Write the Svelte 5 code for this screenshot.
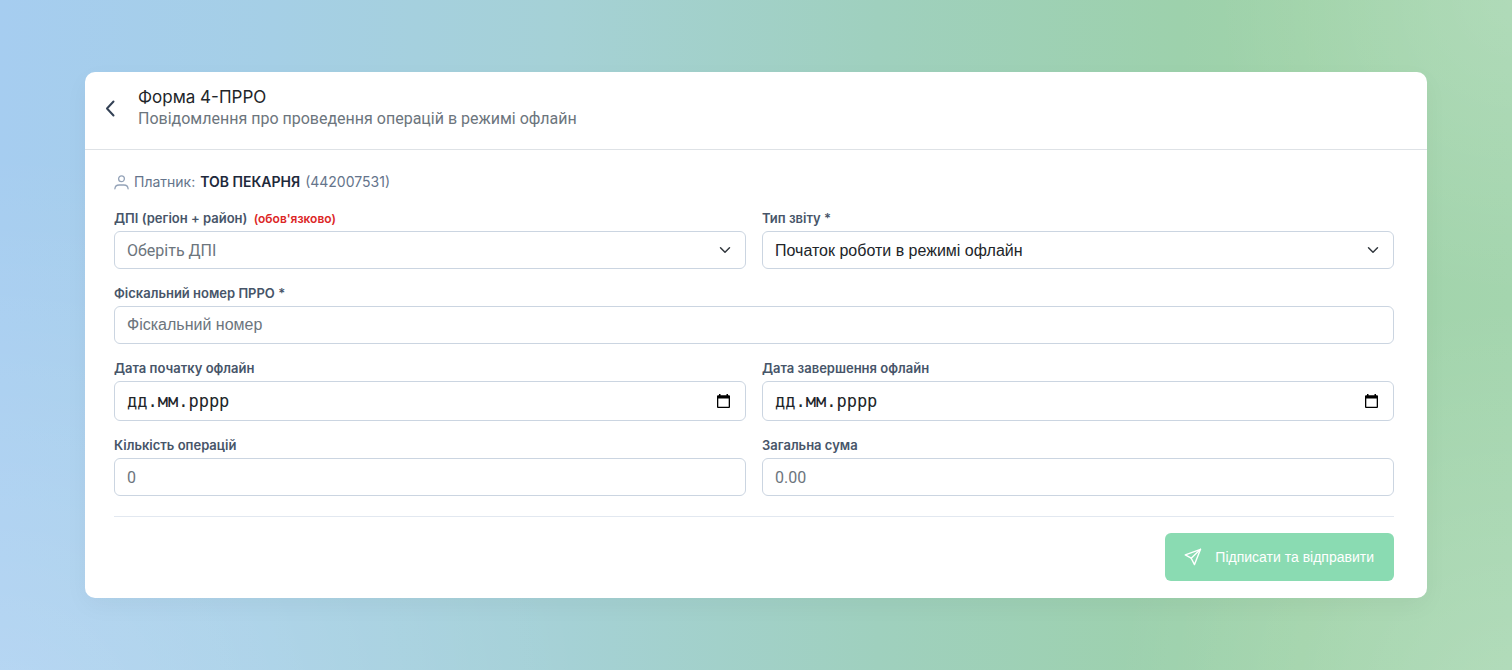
<script lang="ts">
  let office = '';
  let reportType = 'start';
  let fiscalNumber = '';
  let dateStart = '';
  let dateEnd = '';
  let operationsCount = '';
  let totalSum = '';

  const payer = { name: 'ТОВ ПЕКАРНЯ', code: '442007531' };

  const offices: string[] = [];
  const reportTypes = [
    { value: 'start', title: 'Початок роботи в режимі офлайн' },
    { value: 'end', title: 'Завершення роботи в режимі офлайн' },
  ];

  // Tax office is mandatory, so sending stays blocked until it is chosen
  $: canSubmit = office !== '' && fiscalNumber !== '';
</script>

<main>
  <div class="card">
    <header>
      <button class="back" type="button" aria-label="Назад">
        <svg width="24" height="24" viewBox="0 0 24 24" fill="none" stroke="currentColor" stroke-width="2" stroke-linecap="round" stroke-linejoin="round">
          <path d="M15.500 5.500 9 12.500 15.500 19.500" />
        </svg>
      </button>
      <div>
        <h1>Форма 4-ПРРО</h1>
        <p class="subtitle">Повідомлення про проведення операцій в режимі офлайн</p>
      </div>
    </header>

    <form on:submit|preventDefault>
      <p class="payer">
        <svg width="15" height="15" viewBox="0 0 15 15" fill="none" stroke="#94a3b8" stroke-width="1.3" stroke-linecap="round">
          <circle cx="7.500" cy="3.800" r="2.900" />
          <path d="M.9 13.800c.2-2.500 2-3.800 4.200-3.800h4.800c2.200 0 4 1.300 4.200 3.800" />
        </svg>
        <span>Платник:</span>
        <strong>{payer.name}</strong>
        <span>({payer.code})</span>
      </p>

      <div class="grid">
        <div class="field">
          <label for="office">ДПІ (регіон + район) <span class="required">(обов'язково)</span></label>
          <select id="office" class:empty={office === ''} bind:value={office}>
            <option value="">Оберіть ДПІ</option>
            {#each offices as item}
              <option value={item}>{item}</option>
            {/each}
          </select>
        </div>

        <div class="field">
          <label for="type">Тип звіту *</label>
          <select id="type" class="system" bind:value={reportType}>
            {#each reportTypes as type (type.value)}
              <option value={type.value}>{type.title}</option>
            {/each}
          </select>
        </div>

        <div class="field wide">
          <label for="fiscal">Фіскальний номер ПРРО *</label>
          <input id="fiscal" class="system" type="text" placeholder="Фіскальний номер" bind:value={fiscalNumber} />
        </div>

        <div class="field">
          <label for="date-start">Дата початку офлайн</label>
          <div class="date">
            <input id="date-start" type="text" placeholder="дд.мм.рррр" bind:value={dateStart} />
            <button type="button" aria-label="Відкрити календар">
              <svg width="13" height="14" viewBox="0 0 13 14">
                <path fill-rule="evenodd" d="M2 0h1.500v1.200h6V0H11v1.200h1a1 1 0 0 1 1 1V13a1 1 0 0 1-1 1H1a1 1 0 0 1-1-1V2.200a1 1 0 0 1 1-1h1zM1.300 4.500v8.200h10.400V4.500z" />
              </svg>
            </button>
          </div>
        </div>

        <div class="field">
          <label for="date-end">Дата завершення офлайн</label>
          <div class="date">
            <input id="date-end" type="text" placeholder="дд.мм.рррр" bind:value={dateEnd} />
            <button type="button" aria-label="Відкрити календар">
              <svg width="13" height="14" viewBox="0 0 13 14">
                <path fill-rule="evenodd" d="M2 0h1.500v1.200h6V0H11v1.200h1a1 1 0 0 1 1 1V13a1 1 0 0 1-1 1H1a1 1 0 0 1-1-1V2.200a1 1 0 0 1 1-1h1zM1.300 4.500v8.200h10.400V4.500z" />
              </svg>
            </button>
          </div>
        </div>

        <div class="field">
          <label for="count">Кількість операцій</label>
          <input id="count" type="text" inputmode="numeric" placeholder="0" bind:value={operationsCount} />
        </div>

        <div class="field">
          <label for="sum">Загальна сума</label>
          <input id="sum" type="text" inputmode="decimal" placeholder="0.00" bind:value={totalSum} />
        </div>
      </div>

      <footer>
        <button class="submit" type="submit" disabled={!canSubmit}>
          <svg width="18" height="18" viewBox="0 0 18 18" fill="none" stroke="currentColor" stroke-width="1.400" stroke-linejoin="round" stroke-linecap="round">
            <path d="M16.500 1.300 1.300 6.900l5.900 3.300 3.300 6.400z" />
            <path d="M16.500 1.300 7.200 10.200" />
          </svg>
          Підписати та відправити
        </button>
      </footer>
    </form>
  </div>
</main>

<style>
  :global(body) {
    margin: 0;
  }
  main {
    box-sizing: border-box;
    min-height: 100vh;
    padding: 72px 85px;
    font-family: Inter, sans-serif;
    font-size: 16px;
    background:
      radial-gradient(circle at 0% 110%, rgba(255, 255, 255, 0.2), transparent 35%),
      radial-gradient(circle at 100% 0%, rgba(255, 255, 255, 0.13), transparent 18%),
      radial-gradient(circle at 100% 105%, rgba(255, 255, 255, 0.16), transparent 24%),
      linear-gradient(90deg, #a6cdf0 0%, #a5cfe6 18%, #a5d1d6 37%, #9fd0be 58%, #9dd1ac 78%, #a0d3a9 86%, #a4d5ae 100%);
  }
  .card {
    background: #fff;
    border-radius: 10px;
    box-shadow: 0 8px 24px rgba(0, 0, 0, 0.04);
  }
  header {
    display: flex;
    align-items: flex-start;
    gap: 16px;
    padding: 14px 13px 19px;
    border-bottom: 1px solid #dee2e6;
  }
  .back {
    display: flex;
    margin-top: 10px;
    padding: 0;
    border: 0;
    background: none;
    color: #334155;
    cursor: pointer;
  }
  h1,
  p {
    margin: 0;
  }
  h1 {
    font-size: 17px;
    line-height: 22px;
    font-weight: 400;
    color: #212529;
  }
  .subtitle {
    font-family: Roboto, sans-serif;
    line-height: 22px;
    color: #6c757d;
  }
  form {
    padding: 22px 33px 17px 29px;
  }
  .payer {
    display: flex;
    align-items: center;
    gap: 5px;
    margin-bottom: 17px;
    font-size: 14px;
    line-height: 20px;
    color: #64748b;
  }
  .payer strong {
    font-weight: 600;
    color: #1e293b;
  }
  .grid {
    display: grid;
    grid-template-columns: 1fr 1fr;
    gap: 15px 16px;
  }
  .wide {
    grid-column: 1 / -1;
  }
  .field {
    display: flex;
    flex-direction: column;
    gap: 4px;
  }
  label {
    font-size: 13px;
    line-height: 18px;
    font-weight: 600;
    color: #475569;
  }
  .required {
    margin-left: 3px;
    font-size: 12px;
    line-height: 12px;
    color: #dc2626;
  }
  input,
  select {
    box-sizing: border-box;
    width: 100%;
    height: 38px;
    padding: 0 12px;
    border: 1px solid #cbd5e1;
    border-radius: 6px;
    background: #fff;
    font-family: Roboto, sans-serif;
    font-size: 16px;
    color: #212529;
    outline: none;
  }
  input::placeholder {
    color: #6c757d;
    opacity: 1;
  }
  input:focus,
  select:focus {
    border-color: #86b7fe;
  }
  select {
    appearance: none;
    background: #fff url("data:image/svg+xml,%3csvg xmlns='http://www.w3.org/2000/svg' viewBox='0 0 16 16'%3e%3cpath fill='none' stroke='%23343a40' stroke-linecap='round' stroke-linejoin='round' stroke-width='2' d='m2 5 6 6 6-6'/%3e%3c/svg%3e") no-repeat right 14px center / 12px 12px;
  }
  select.empty {
    color: #6c757d;
  }
  .system {
    font-family: 'Liberation Sans', Arial, sans-serif;
  }
  .date {
    position: relative;
  }
  .date input {
    display: block;
    height: 40px;
    font-family: 'DejaVu Sans Mono', monospace;
    font-size: 17px;
  }
  .date input::placeholder {
    color: #212529;
  }
  .date button {
    position: absolute;
    top: 13px;
    right: 16px;
    display: flex;
    padding: 0;
    border: 0;
    background: none;
    cursor: pointer;
  }
  footer {
    display: flex;
    justify-content: flex-end;
    margin-top: 20px;
    padding-top: 16px;
    border-top: 1px solid #e2e8f0;
  }
  .submit {
    display: flex;
    align-items: center;
    gap: 13px;
    height: 48px;
    padding: 0 20px 0 19px;
    border: 0;
    border-radius: 6px;
    background: #8adbb2;
    font-family: 'Liberation Sans', Arial, sans-serif;
    font-size: 14px;
    color: #fff;
  }
</style>
